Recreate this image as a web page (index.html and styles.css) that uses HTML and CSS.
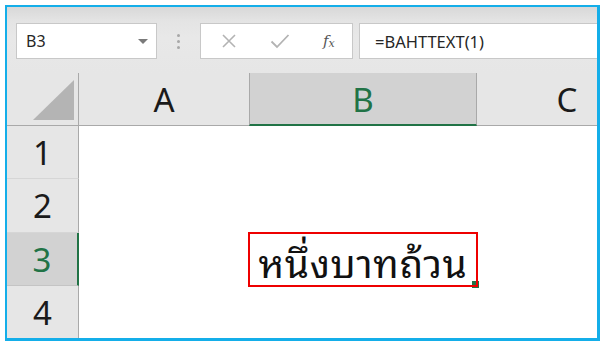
FILE: index.html
```html
<!DOCTYPE html>
<html lang="th">
<head>
<meta charset="utf-8">
<link rel="stylesheet" href="styles.css">
</head>
<body>
<div class="frame">
  <div class="toolbar">
    <div class="namebox">
      <span class="ref">B3</span>
      <span class="caret"></span>
    </div>
    <div class="grip"><i></i><i></i><i></i></div>
    <div class="btns">
      <svg class="ico" width="16" height="16" viewBox="0 0 16 16"><path d="M2 2 L14 14 M14 2 L2 14" stroke="#b3b3b3" stroke-width="1.6" fill="none"/></svg>
      <svg class="ico" width="20" height="16" viewBox="0 0 20 16"><path d="M1.5 8.5 L7 14 L18.5 2" stroke="#b3b3b3" stroke-width="1.8" fill="none"/></svg>
      <span class="fx">f<sub>x</sub></span>
    </div>
    <div class="formula">=BAHTTEXT(1)</div>
  </div>
  <div class="sheet">
    <div class="corner"><span class="tri"></span></div>
    <div class="colh">A</div>
    <div class="colh sel">B</div>
    <div class="colh">C</div>

    <div class="rowh">1</div><div class="cell"></div><div class="cell"></div><div class="cell"></div>
    <div class="rowh">2</div><div class="cell"></div><div class="cell"></div><div class="cell"></div>
    <div class="rowh sel">3</div><div class="cell"></div><div class="cell active"><span class="val">หนึ่งบาทถ้วน</span><span class="mark"></span></div><div class="cell"></div>
    <div class="rowh">4</div><div class="cell"></div><div class="cell"></div><div class="cell"></div>
  </div>
</div>
</body>
</html>
```

FILE: styles.css
```css
* { box-sizing: border-box; }
html, body { margin: 0; padding: 0; background: #ffffff; }
body { font-family: "Noto Sans", "Open Sans", sans-serif; }

.frame {
  margin: 5px 0 0 5px;
  width: 595px;
  height: 336px;
  border: solid #14aee9;
  border-width: 2px 3px 3px 2px;
  overflow: hidden;
  background: #e6e6e6;
}

.toolbar {
  height: 66px;
  display: flex;
  align-items: flex-start;
  padding: 16px 0 0 9px;
  background: linear-gradient(#d8d8d8 0px, #e4e4e4 14px, #e8e8e8 30px, #e6e6e6 66px);
}

.namebox {
  width: 141px;
  height: 36px;
  background: #fff;
  border: 1px solid #c8c8c8;
  display: flex;
  align-items: center;
  justify-content: space-between;
  padding: 0 8px 0 9px;
}
.ref { font-size: 16px; color: #262626; letter-spacing: 0.2px; }
.caret {
  width: 0; height: 0;
  border-left: 5px solid transparent;
  border-right: 5px solid transparent;
  border-top: 5px solid #7a7a7a;
}

.grip {
  width: 43px;
  height: 36px;
  display: flex;
  flex-direction: column;
  align-items: center;
  justify-content: center;
  gap: 3px;
}
.grip i { display: block; width: 3px; height: 3px; border-radius: 50%; background: #a8a8a8; }

.btns {
  width: 153px;
  height: 36px;
  background: #fff;
  border: 1px solid #c8c8c8;
  display: flex;
  align-items: center;
  padding-left: 20px;
  gap: 0;
}
.btns .ico:first-child { margin-right: 33px; }
.btns .ico:nth-child(2) { margin-right: 33px; }
.fx {
  font-family: "DejaVu Serif", "Liberation Serif", serif;
  font-style: italic;
  font-size: 15px;
  color: #555;
  line-height: 1;
}
.fx sub { font-size: 11px; vertical-align: -1px; }

.formula {
  margin-left: 6px;
  flex: 1 0 auto;
  height: 36px;
  background: #fff;
  border: 1px solid #c8c8c8;
  border-right: none;
  display: flex;
  align-items: center;
  padding-left: 15px;
  font-size: 16.5px;
  color: #262626;
}

.sheet {
  display: grid;
  grid-template-columns: 72px 170px 228px 180px;
  grid-template-rows: 53px 53px 54px 53px 53px;
  background: #fff;
}

.corner {
  background: #e6e6e6;
  border-right: 1px solid #a9a9a9;
  border-bottom: 1px solid #a9a9a9;
  display: flex;
  align-items: flex-end;
  justify-content: flex-end;
  padding: 0 4px 5px 0;
}
.tri {
  width: 41px; height: 40px;
  background: #b4b4b4;
  clip-path: polygon(100% 0, 100% 100%, 0 100%);
}

.colh {
  background: #e6e6e6;
  border-bottom: 1px solid #a9a9a9;
  display: flex;
  align-items: center;
  justify-content: center;
  font-size: 33px;
  color: #1a1a1a;
  padding-top: 1px;
}
.colh.sel {
  background: #d2d2d2;
  color: #217346;
  border-left: 1px solid #a9a9a9;
  border-right: 1px solid #a9a9a9;
  border-bottom: 2px solid #217346;
}

.rowh {
  background: #e6e6e6;
  border-right: 1px solid #a9a9a9;
  border-bottom: 1px solid #d6d6d6;
  display: flex;
  align-items: center;
  justify-content: center;
  font-size: 33px;
  color: #1a1a1a;
}
.rowh.sel {
  background: #d2d2d2;
  color: #217346;
  border-right: 2px solid #217346;
  border-bottom-color: #c4c4c4;
}

.cell { background: #fff; }

.active {
  position: relative;
  display: flex;
  align-items: center;
  justify-content: center;
  border: 1px solid #5f8f74;
}
.val {
  font-family: "Noto Sans Thai Looped", "Noto Sans Thai", "Noto Sans", sans-serif;
  font-size: 39px;
  font-weight: 400;
  letter-spacing: 0.6px;
  color: #111;
  line-height: 1;
  margin-top: 2px;
}
.active::after {
  content: "";
  position: absolute;
  right: -4px;
  bottom: -4px;
  width: 7px;
  height: 7px;
  background: #217346;
  border: 1px solid #fff;
}
.mark {
  position: absolute;
  left: -2px; top: -2px; right: -2px; bottom: -2px;
  border: 2px solid #ee0000;
  z-index: 2;
}
```
